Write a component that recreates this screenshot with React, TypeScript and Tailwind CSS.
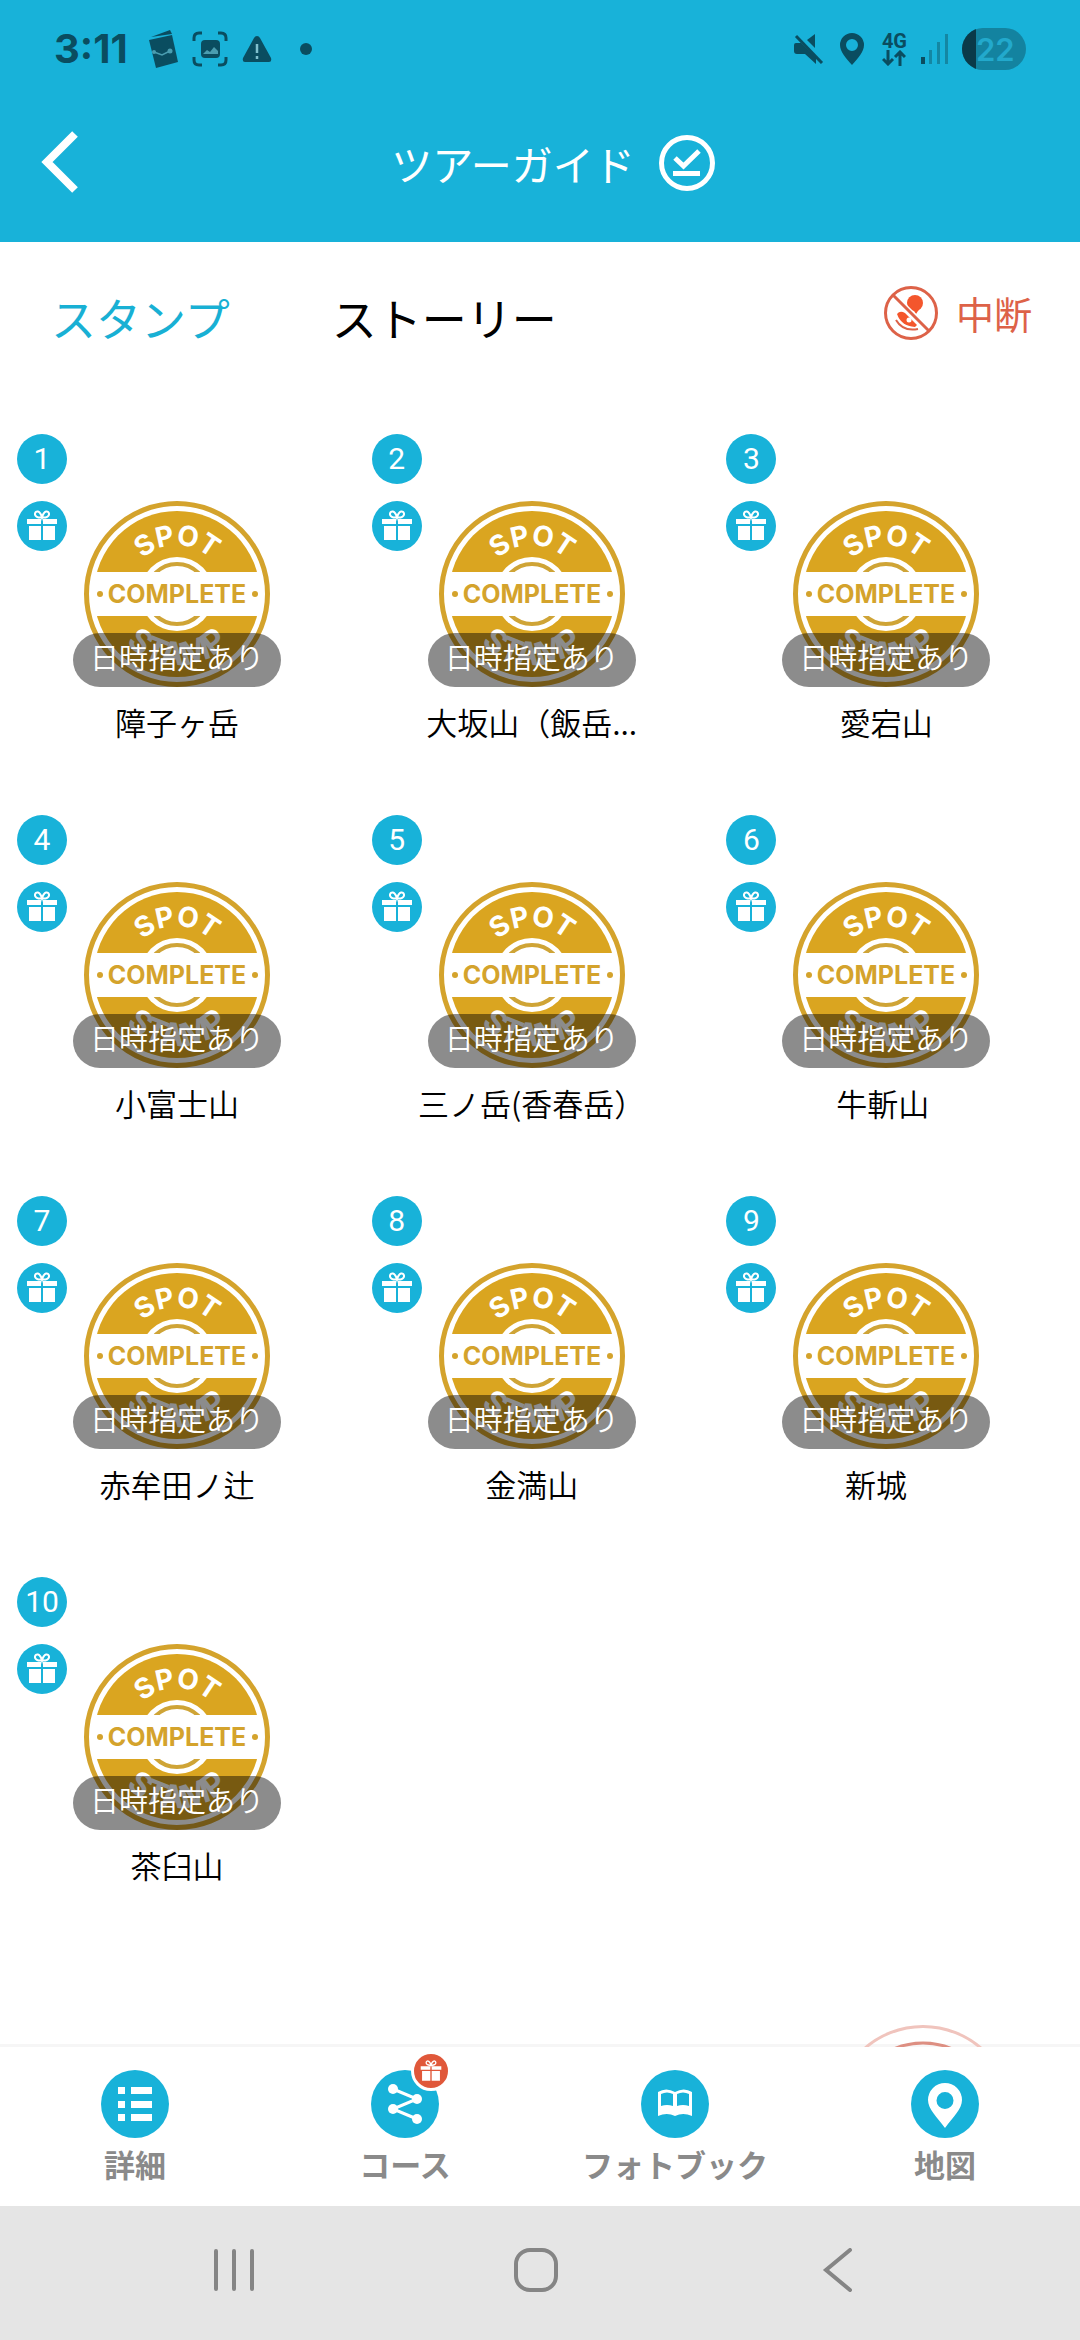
import type { ReactNode } from "react";

type Spot = {
  id: number;
  name: string;
};

type NavItem = {
  label: string;
  icon: ReactNode;
  hasGift?: boolean;
};

const spots: Spot[] = [
  { id: 1, name: "障子ヶ岳" },
  { id: 2, name: "大坂山（飯岳..." },
  { id: 3, name: "愛宕山" },
  { id: 4, name: "小富士山" },
  { id: 5, name: "三ノ岳(香春岳）" },
  { id: 6, name: "牛斬山\u00a0" },
  { id: 7, name: "赤牟田ノ辻" },
  { id: 8, name: "金満山" },
  { id: 9, name: "新城\u00a0\u00a0\u00a0" },
  { id: 10, name: "茶臼山" },
];

function GiftIcon({ className }: { className?: string }) {
  return (
    <svg viewBox="0 0 32 32" className={className} fill="currentColor" aria-hidden="true">
      <path d="M1 9h14v5H1zM17 9h14v5H17zM3 16h12v14H3zM17 16h12v14H17z" />
      <path
        d="M16 7.500C12 8 8.500 6.500 9 3.500 9.500 .5 14 0 16 7.500 18 0 22.500 .5 23 3.500 23.500 6.500 20 8 16 7.500z"
        fill="none"
        stroke="currentColor"
        strokeWidth="2"
      />
    </svg>
  );
}

function StatusBar() {
  return (
    <div className="flex h-[98px] items-center justify-between pl-[54px] pr-[54px] text-[#0a4d60]">
      <div className="flex items-center">
        <span className="font-['Inter',sans-serif] text-[40px] font-bold leading-none">3:11</span>
        <svg viewBox="0 0 32 38" className="ml-5 h-[38px] w-8" aria-hidden="true">
          <path d="M1 10 24 5 30 32 8 38z" fill="currentColor" />
          <path d="M3 7 22 0 24 4z" fill="currentColor" />
          <path d="M6 22 14 25 22 21" fill="none" stroke="#4a9db0" strokeWidth="1.500" />
          <circle cx="6" cy="22" r="2" fill="#4a9db0" />
          <circle cx="22" cy="21" r="2.500" fill="#4a9db0" />
        </svg>
        <svg viewBox="0 0 36 36" className="ml-3 h-9 w-9" aria-hidden="true">
          <path
            d="M2 10V7Q2 2 7 2h3M26 2h3q5 0 5 5v3M34 26v3q0 5-5 5h-3M10 34H7q-5 0-5-5v-3"
            fill="none"
            stroke="currentColor"
            strokeWidth="3"
          />
          <rect x="9" y="9" width="19" height="18" rx="4" fill="currentColor" />
          <path d="M11 23l4-4 3 2 4-5 4 4v3z" fill="#4a9db0" />
        </svg>
        <svg viewBox="0 0 30 28" className="ml-3.5 h-7 w-[30px]" aria-hidden="true">
          <path d="M15 1q2 0 3 2l11 20q1 4-2 4H3q-3 0-2-4L12 3q1-2 3-2z" fill="currentColor" />
          <path d="M15 9v9M15 21v3" stroke="#7fc0cd" strokeWidth="2.500" />
        </svg>
        <span className="ml-7 size-3 rounded-full bg-current" />
      </div>
      <div className="flex items-center">
        <svg viewBox="0 0 30 30" className="h-[30px] w-[30px]" aria-hidden="true">
          <path d="M0 11Q0 9 2 9H7L22 24V30L11 20H3Q0 20 0 17z" fill="currentColor" />
          <path d="M13 6 21 0V14z" fill="currentColor" />
          <path d="M2 2 28 29" stroke="currentColor" strokeWidth="3" />
        </svg>
        <svg viewBox="0 0 24 32" className="ml-4 h-8 w-6" aria-hidden="true">
          <path
            d="M12 0a12 12 0 0 1 12 12c0 7-6 13-12 20C6 25 0 19 0 12A12 12 0 0 1 12 0zm0 6a6 6 0 1 0 0 12 6 6 0 0 0 0-12z"
            fill="currentColor"
          />
        </svg>
        <div className="ml-[18px] flex flex-col items-center">
          <span className="font-['Roboto',sans-serif] text-[20px] font-bold leading-[18px]">4G</span>
          <svg viewBox="0 0 24 16" className="h-4 w-6" fill="none" stroke="currentColor" strokeWidth="3" aria-hidden="true">
            <path d="M6 0v13M1 9l5 5 5-5M18 16V3M13 7l5-5 5 5" />
          </svg>
        </div>
        <svg viewBox="0 0 28 30" className="ml-3.5 h-[30px] w-7" aria-hidden="true">
          <path d="M0 23h4v7H0z" fill="currentColor" />
          <path d="M8 16h3v14H8zM16 8h3v22h-3zM24 0h3v30h-3z" fill="#1487a3" />
        </svg>
        <div className="ml-[13px] flex h-[42px] w-16 items-center overflow-hidden rounded-full bg-[#1383a0]">
          <span className="h-full w-3.5 bg-[#0a3a49]" />
          <span className="font-['Inter',sans-serif] text-[31px] font-semibold leading-none text-[#22a9cc]">22</span>
        </div>
      </div>
    </div>
  );
}

function AppHeader() {
  return (
    <header className="bg-[#18b2d9]">
      <StatusBar />
      <div className="flex h-36 items-start text-white">
        <button type="button" aria-label="戻る" className="flex h-32 w-[106px] items-center pl-10">
          <svg viewBox="0 0 40 64" className="h-16 w-10" fill="none" stroke="currentColor" strokeWidth="8" aria-hidden="true">
            <path d="M35 4 7 32 35 60" />
          </svg>
        </button>
        <div className="mr-20 flex h-[130px] flex-1 items-center justify-center gap-6">
          <h1 className="text-[41px] leading-[60px]">ツアーガイド</h1>
          <svg viewBox="0 0 56 56" className="size-14" fill="none" stroke="currentColor" aria-hidden="true">
            <circle cx="28" cy="28" r="25.500" strokeWidth="5" />
            <path d="M16 23 24.500 31 40 16" strokeWidth="5" />
            <path d="M14 38.500h27" strokeWidth="5" />
          </svg>
        </div>
      </div>
    </header>
  );
}

function TabBar() {
  return (
    <div className="flex h-[156px] items-start justify-between pl-[51px] pr-12">
      <div role="tablist" className="flex gap-[102px] pt-[46px] text-[45px] leading-[60px]">
        <button type="button" role="tab" aria-selected="true" className="text-[#18b0d4]">
          スタンプ
        </button>
        <button type="button" role="tab" aria-selected="false" className="text-black">
          ストーリー
        </button>
      </div>
      <button type="button" className="flex items-center gap-[18px] pt-11 text-[38px] leading-[54px] text-[#dd6248]">
        <svg viewBox="0 0 54 54" className="size-[54px]" aria-hidden="true">
          <circle cx="27" cy="27" r="25.500" fill="none" stroke="currentColor" strokeWidth="3" />
          <circle cx="31" cy="17" r="8" fill="#f4562c" />
          <path d="M28 22h8l-4 6z" fill="#f4562c" />
          <path d="M13 28q3-4 8-1l12 12-2 2q-14-1-18-13z" fill="#f4562c" />
          <circle cx="25" cy="34" r="2.500" fill="#fff" />
          <path d="M12 34q7 12 22 9" fill="none" stroke="currentColor" strokeWidth="2" />
          <path d="M11 11 43 43" stroke="#fff" strokeWidth="6" />
          <path d="M9 9 45 45" stroke="currentColor" strokeWidth="3" />
        </svg>
        中断
      </button>
    </div>
  );
}

function CompleteStamp() {
  return (
    <svg viewBox="0 0 186 186" className="size-[186px]" aria-hidden="true">
      <circle cx="93" cy="93" r="90.500" fill="#fff" stroke="#d4a32c" strokeWidth="5" />
      <circle cx="93" cy="93" r="83" fill="#daa520" />
      <circle cx="93" cy="93" r="37" fill="#fff" />
      <circle cx="93" cy="93" r="30" fill="#fff" stroke="#cfa436" strokeWidth="4" />
      <path d="M8 71h170v44H8z" fill="#fff" />
      <path id="stamp-top" d="M44 93a49 49 0 0 1 98 0" fill="none" />
      <path id="stamp-bottom" d="M22 93a71 71 0 0 0 142 0" fill="none" />
      <g className="font-['Inter',sans-serif] font-bold" textAnchor="middle">
        <text className="text-[28px]" fill="#fff">
          <textPath href="#stamp-top" startOffset="50%">SPOT</textPath>
        </text>
        <text className="text-[32px]" fill="#fff">
          <textPath href="#stamp-bottom" startOffset="50%">STAMP</textPath>
        </text>
        <text x="93" y="102" className="text-[25px]" fill="#d4a32c">COMPLETE</text>
      </g>
      <circle cx="16" cy="93" r="3" fill="#d4a32c" />
      <circle cx="171" cy="93" r="3" fill="#d4a32c" />
    </svg>
  );
}

function SpotCard({ spot }: { spot: Spot }) {
  return (
    <li className="flex h-[381px] items-start pl-[17px]">
      <div className="flex flex-col gap-[17px] pt-9 text-white">
        <span className="flex size-[50px] items-center justify-center rounded-full bg-[#18b2d9] font-['Roboto',sans-serif] text-[30px] leading-[52px]">
          {spot.id}
        </span>
        <span className="flex size-[50px] items-center justify-center rounded-full bg-[#18b2d9]">
          <GiftIcon className="size-8" />
        </span>
      </div>
      <div className="flex w-[220px] flex-col items-center pt-[103px]">
        <div className="relative flex w-[208px] justify-center">
          <CompleteStamp />
          <span className="absolute inset-x-0 bottom-0 h-[54px] rounded-full bg-black/45 text-center text-[29px] font-[350] leading-[46px] text-white">
            日時指定あり
          </span>
        </div>
        <p className="mt-3 whitespace-nowrap text-[31px] font-[350] leading-[46px] text-black">{spot.name}</p>
      </div>
    </li>
  );
}

const navItems: NavItem[] = [
  {
    label: "詳細",
    icon: <path d="M17 17h7v7h-7zM30 17h21v7H30zM17 31h7v7h-7zM30 31h21v7H30zM17 44h7v7h-7zM30 44h21v7H30z" />,
  },
  {
    label: "コース",
    hasGift: true,
    icon: (
      <>
        <path d="M22 19 46 29 22 39 46 49" fill="none" stroke="currentColor" strokeWidth="3" />
        <circle cx="22" cy="19" r="5" />
        <circle cx="46" cy="29" r="5" />
        <circle cx="22" cy="39" r="5" />
        <circle cx="46" cy="49" r="5" />
      </>
    ),
  },
  {
    label: "フォトブック",
    icon: (
      <path
        fillRule="evenodd"
        d="M17 22q8-5 17 0 9-5 17 0v24q-9-4-17 0-8-4-17 0zM20 24v12q6-2 12 0V24q-6-3-12 0zM36 24v12q6-2 12 0V24q-6-3-12 0z"
      />
    ),
  },
  {
    label: "地図",
    icon: (
      <path
        fillRule="evenodd"
        d="M34 13a17 17 0 0 1 17 17c0 9-9 17-17 28-8-11-17-19-17-28a17 17 0 0 1 17-17zM34 22a8.500 8.500 0 1 0 0 17 8.500 8.500 0 0 0 0-17z"
      />
    ),
  },
];

function BottomNav() {
  return (
    <nav className="relative grid h-[159px] grid-cols-4 bg-white">
      {navItems.map((item) => (
        <a key={item.label} href="#" className="flex flex-col items-center pt-[23px]">
          <span className="relative">
            <svg viewBox="0 0 68 68" className="size-[68px] rounded-full bg-[#18b2d9] text-white" fill="currentColor" aria-hidden="true">
              {item.icon}
            </svg>
            {item.hasGift && (
              <span className="absolute -right-3 -top-[19px] flex size-10 items-center justify-center rounded-full border-3 border-white bg-[#e0583a] text-white">
                <GiftIcon className="size-[22px]" />
              </span>
            )}
          </span>
          <span className="mt-[3px] text-[31px] font-bold leading-[46px] text-[#8a8a8a]">{item.label}</span>
        </a>
      ))}
    </nav>
  );
}

function SystemNav() {
  return (
    <div className="flex h-[134px] items-center justify-center gap-[258px] bg-[#e5e5e5] pb-1.5 pr-[9px] text-[#858585]">
      <button type="button" aria-label="履歴">
        <svg viewBox="0 0 44 44" className="size-11" stroke="currentColor" strokeWidth="4" strokeLinecap="round" aria-hidden="true">
          <path d="M4 3v38M22 3v38M40 3v38" />
        </svg>
      </button>
      <button type="button" aria-label="ホーム">
        <svg viewBox="0 0 44 44" className="size-11" fill="none" stroke="currentColor" strokeWidth="4" aria-hidden="true">
          <rect x="2" y="2" width="40" height="40" rx="14" />
        </svg>
      </button>
      <button type="button" aria-label="前へ">
        <svg viewBox="0 0 44 44" className="size-11" fill="none" stroke="currentColor" strokeWidth="4" strokeLinecap="round" aria-hidden="true">
          <path d="M34 2 10 22 34 42" />
        </svg>
      </button>
    </div>
  );
}

export default function App() {
  return (
    <div className="flex min-h-screen flex-col bg-white font-['Noto_Sans_CJK_JP',sans-serif]">
      <AppHeader />
      <main className="relative flex flex-1 flex-col overflow-hidden">
        <TabBar />
        <ul className="grid grid-cols-3 pr-4">
          {spots.map((spot) => (
            <SpotCard key={spot.id} spot={spot} />
          ))}
        </ul>
        <div className="mt-auto h-[3px] bg-[#f6f6f6]" />
        {/* floating action button, mostly below the fold */}
        <svg
          viewBox="0 0 180 180"
          className="absolute -bottom-[158px] right-[67px] size-[180px]"
          fill="none"
          aria-hidden="true"
        >
          <circle cx="90" cy="90" r="88.500" stroke="#f0c4bd" strokeWidth="3" />
          <circle cx="90" cy="90" r="72" stroke="#dd8f82" strokeWidth="3" />
        </svg>
      </main>
      <BottomNav />
      <SystemNav />
    </div>
  );
}
